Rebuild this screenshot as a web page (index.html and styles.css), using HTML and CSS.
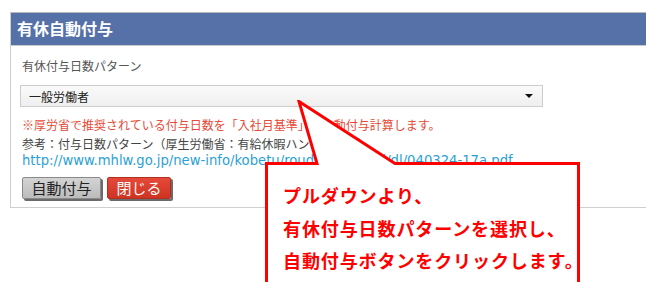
FILE: index.html
```html
<!DOCTYPE html>
<html lang="ja">
<head>
<meta charset="utf-8">
<title>有休自動付与</title>
<link rel="stylesheet" href="styles.css">
</head>
<body>

<div class="panel">
  <div class="panel-head">有休自動付与</div>
  <div class="panel-body">
    <div class="field-label">有休付与日数パターン</div>
    <div class="select-wrap">
      <select class="pattern-select">
        <option>一般労働者</option>
        <option>週所定労働日数4日</option>
        <option>週所定労働日数3日</option>
      </select>
    </div>
    <p class="note">※厚労省で推奨されている付与日数を「入社月基準」で自動付与計算します。</p>
    <p class="ref">参考：付与日数パターン（厚生労働省：有給休暇ハンドブック）</p>
    <p class="ref ref-url"><a class="ref-link" href="#">http://www.mhlw.go.jp/new-info/kobetu/roudou/gyousei/dl/040324-17a.pdf</a></p>
    <div class="buttons">
      <button type="button" class="btn btn-grant">自動付与</button>
      <button type="button" class="btn btn-close">閉じる</button>
    </div>
  </div>
</div>

<div class="callout">
  <svg class="callout-shape" width="316" height="184" viewBox="0 0 316 184">
    <path d="M1.5 63.5 L52 63.5 L34 1.5 L130 63.5 L313.5 63.5 L313.5 200 L1.5 200 Z" fill="#fff" stroke="#ff0000" stroke-width="3"/>
  </svg>
  <div class="callout-text">
    プルダウンより、<br>
    有休付与日数パターンを選択し、<br>
    自動付与ボタンをクリックします。
  </div>
</div>

</body>
</html>
```

FILE: styles.css
```css
html,
body {
  height: 100%;
  overflow: hidden;
}

body {
  box-sizing: border-box;
  font-family: "Noto Sans CJK JP", "Noto Sans", sans-serif;
  background-color: #fff;
  margin: 0;
  padding: 12px 0 0 10px;
  position: relative;
}

.panel {
  width: 640px;
  border: 1px solid #cfcfcf;
  border-top-color: #b9b9b9;
}

.panel-head {
  height: 32px;
  line-height: 31px;
  padding-left: 6px;
  background-color: #5571a8;
  border-bottom: 1px solid #c9c9c9;
  color: #fff;
  font-size: 16px;
  font-weight: bold;
}

.panel-body {
  padding: 10px 0 8px 11px;
}

.field-label {
  font-size: 12px;
  line-height: 19px;
  color: #555;
}

.select-wrap {
  position: relative;
  width: 523px;
  margin: 10px 0 0 -2px;
}

.select-wrap::after {
  content: "";
  position: absolute;
  right: 10px;
  top: 9px;
  border-left: 4px solid transparent;
  border-right: 4px solid transparent;
  border-top: 4px solid #111;
}

.pattern-select {
  display: block;
  width: 100%;
  height: 22px;
  padding: 0 0 0 8px;
  border: 1px solid #cdcdcd;
  border-radius: 0;
  background: linear-gradient(#fafafa, #efefef);
  font-family: inherit;
  font-size: 12px;
  color: #222;
  -webkit-appearance: none;
  appearance: none;
}

.note,
.ref {
  margin: 0;
  font-size: 12px;
  line-height: 19px;
  white-space: nowrap;
}

.note {
  margin-top: 8px;
  color: #e64a36;
}

.ref {
  color: #444;
}

.ref-url {
  line-height: 14px;
}

.ref-link {
  font-family: "DejaVu Sans", sans-serif;
  font-size: 13.2px;
  line-height: 14px;
  color: #2c9fd6;
  text-decoration: none;
}

.buttons {
  display: flex;
  gap: 6px;
  margin-top: 9px;
}

.btn {
  height: 22px;
  padding: 0;
  border-radius: 2px;
  font-family: inherit;
  font-size: 15px;
  line-height: 20px;
  box-shadow: 2px 2px 0 #6b6b6b;
  cursor: pointer;
}

.btn-grant {
  width: 79px;
  border: 1px solid #8a8a8a;
  background: linear-gradient(#d3d3d3, #bcbcbc);
  color: #222;
}

.btn-close {
  width: 64px;
  border: 1px solid #b3301f;
  background: linear-gradient(#e5493a, #cf3322);
  color: #fff;
}

.callout {
  position: absolute;
  left: 265px;
  top: 100px;
  width: 316px;
  height: 184px;
}

.callout-shape {
  position: absolute;
  left: 0;
  top: 0;
}

.callout-text {
  position: relative;
  padding: 79px 0 0 18px;
  font-size: 18px;
  font-weight: bold;
  line-height: 32.5px;
  letter-spacing: 0.9px;
  color: #ff0000;
  white-space: nowrap;
}
```
